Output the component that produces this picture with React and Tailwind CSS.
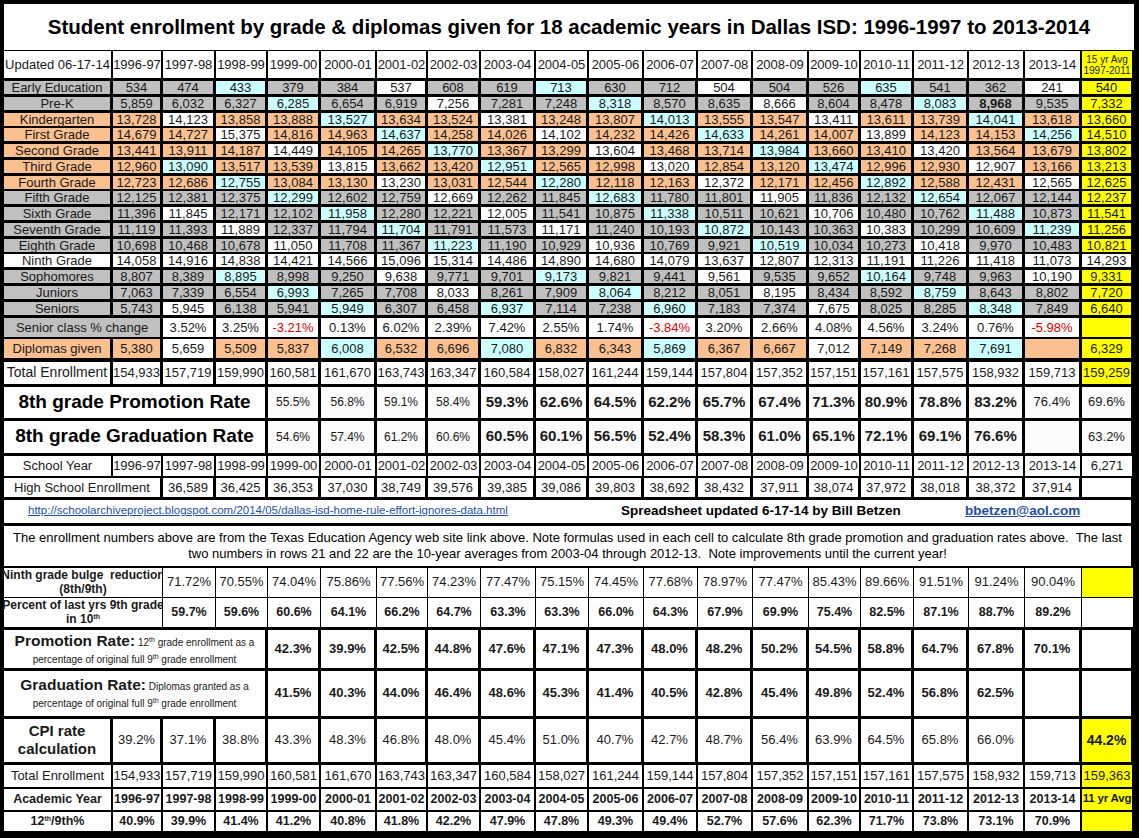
// Dallas ISD enrollment spreadsheet, redrawn as a Tailwind grid

const GRID =
  "grid grid-cols-[109px_50px_53px_52px_53px_56px_51px_53px_55px_53px_55px_54px_55px_56px_52px_53px_55px_56px_57px_52px]";

const BG = {
  g: "bg-[#c0c0c0]",
  o: "bg-[#fac090]",
  c: "bg-[#ccffff]",
  w: "bg-white",
  y: "bg-[#ffff00]",
};

const YEARS = [
  "1996-97", "1997-98", "1998-99", "1999-00", "2000-01", "2001-02", "2002-03", "2003-04", "2004-05",
  "2005-06", "2006-07", "2007-08", "2008-09", "2009-10", "2010-11", "2011-12", "2012-13", "2013-14",
];

const GRADES = [
  ["Early Education", "g", "ggcggwggcggwggcggwy", "534 474 433 379 384 537 608 619 713 630 712 504 504 526 635 541 362 241 540"],
  ["Pre-K", "g", "gggcggwggcggwggcggy", "5,859 6,032 6,327 6,285 6,654 6,919 7,256 7,281 7,248 8,318 8,570 8,635 8,666 8,604 8,478 8,083 *8,968 9,535 7,332"],
  ["Kindergarten", "o", "owoocoowoocoowoocoy", "13,728 14,123 13,858 13,888 13,527 13,634 13,524 13,381 13,248 13,807 14,013 13,555 13,547 13,411 13,611 13,739 14,041 13,618 13,660"],
  ["First Grade", "o", "oowoocoowoocoowoocy", "14,679 14,727 15,375 14,816 14,963 14,637 14,258 14,026 14,102 14,232 14,426 14,633 14,261 14,007 13,899 14,123 14,153 14,256 14,510"],
  ["Second Grade", "o", "ooowoocoowoocoowooy", "13,441 13,911 14,187 14,449 14,105 14,265 13,770 13,367 13,299 13,604 13,468 13,714 13,984 13,660 13,410 13,420 13,564 13,679 13,802"],
  ["Third Grade", "o", "ocoowoocoowoocoowoy", "12,960 13,090 13,517 13,539 13,815 13,662 13,420 12,951 12,565 12,998 13,020 12,854 13,120 13,474 12,996 12,930 12,907 13,166 13,213"],
  ["Fourth Grade", "o", "oocoowoocoowoocoowy", "12,723 12,686 12,755 13,084 13,130 13,230 13,031 12,544 12,280 12,118 12,163 12,372 12,171 12,456 12,892 12,588 12,431 12,565 12,625"],
  ["Fifth Grade", "g", "gggcggwggcggwggcggy", "12,125 12,381 12,375 12,299 12,602 12,759 12,669 12,262 11,845 12,683 11,780 11,801 11,905 11,836 12,132 12,654 12,067 12,144 12,237"],
  ["Sixth Grade", "g", "gwggcggwggcggwggcgy", "11,396 11,845 12,171 12,102 11,958 12,280 12,221 12,005 11,541 10,875 11,338 10,511 10,621 10,706 10,480 10,762 11,488 10,873 11,541"],
  ["Seventh Grade", "g", "ggwggcggwggcggwggcy", "11,119 11,393 11,889 12,337 11,794 11,704 11,791 11,573 11,171 11,240 10,193 10,872 10,143 10,363 10,383 10,299 10,609 11,239 11,256"],
  ["Eighth Grade", "g", "gggwggcggwggcggwggy", "10,698 10,468 10,678 11,050 11,708 11,367 11,223 11,190 10,929 10,936 10,769 9,921 10,519 10,034 10,273 10,418 9,970 10,483 10,821"],
  ["Ninth Grade", "w", "wwwwwwwwwwwwwwwwwww", "14,058 14,916 14,838 14,421 14,566 15,096 15,314 14,486 14,890 14,680 14,079 13,637 12,807 12,313 11,191 11,226 11,418 11,073 14,293"],
  ["Sophomores", "g", "ggcggwggcggwggcggwy", "8,807 8,389 8,895 8,998 9,250 9,638 9,771 9,701 9,173 9,821 9,441 9,561 9,535 9,652 10,164 9,748 9,963 10,190 9,331"],
  ["Juniors", "g", "gggcggwggcggwggcggy", "7,063 7,339 6,554 6,993 7,265 7,708 8,033 8,261 7,909 8,064 8,212 8,051 8,195 8,434 8,592 8,759 8,643 8,802 7,720"],
  ["Seniors", "g", "gwggcggcggcggwggcgy", "5,743 5,945 6,138 5,941 5,949 6,307 6,458 6,937 7,114 7,238 6,960 7,183 7,374 7,675 8,025 8,285 8,348 7,849 6,640"],
];

const CHANGE = "3.52% 3.25% -3.21% 0.13% 6.02% 2.39% 7.42% 2.55% 1.74% -3.84% 3.20% 2.66% 4.08% 4.56% 3.24% 0.76% -5.98%".split(" ");
const DIPLOMAS = "5,380 5,659 5,509 5,837 6,008 6,532 6,696 7,080 6,832 6,343 5,869 6,367 6,667 7,012 7,149 7,268 7,691 - 6,329".split(" ");
const TOTAL = "154,933 157,719 159,990 160,581 161,670 163,743 163,347 160,584 158,027 161,244 159,144 157,804 157,352 157,151 157,161 157,575 158,932 159,713".split(" ");
const PROMO8 = "55.5% 56.8% 59.1% 58.4% 59.3% 62.6% 64.5% 62.2% 65.7% 67.4% 71.3% 80.9% 78.8% 83.2% 76.4% 69.6%".split(" ");
const GRAD8 = "54.6% 57.4% 61.2% 60.6% 60.5% 60.1% 56.5% 52.4% 58.3% 61.0% 65.1% 72.1% 69.1% 76.6% - 63.2%".split(" ");
const HS = "36,589 36,425 36,353 37,030 38,749 39,576 39,385 39,086 39,803 38,692 38,432 37,911 38,074 37,972 38,018 38,372 37,914 -".split(" ");
const BULGE = "71.72% 70.55% 74.04% 75.86% 77.56% 74.23% 77.47% 75.15% 74.45% 77.68% 78.97% 77.47% 85.43% 89.66% 91.51% 91.24% 90.04%".split(" ");
const TENTH = "59.7% 59.6% 60.6% 64.1% 66.2% 64.7% 63.3% 63.3% 66.0% 64.3% 67.9% 69.9% 75.4% 82.5% 87.1% 88.7% 89.2% -".split(" ");
const PROMO = "42.3% 39.9% 42.5% 44.8% 47.6% 47.1% 47.3% 48.0% 48.2% 50.2% 54.5% 58.8% 64.7% 67.8% 70.1% -".split(" ");
const GRAD = "41.5% 40.3% 44.0% 46.4% 48.6% 45.3% 41.4% 40.5% 42.8% 45.4% 49.8% 52.4% 56.8% 62.5% - -".split(" ");
const CPI = "39.2% 37.1% 38.8% 43.3% 48.3% 46.8% 48.0% 45.4% 51.0% 40.7% 42.7% 48.7% 56.4% 63.9% 64.5% 65.8% 66.0% -".split(" ");
const RATIO = "40.9% 39.9% 41.4% 41.2% 40.8% 41.8% 42.2% 47.9% 47.8% 49.3% 49.4% 52.7% 57.6% 62.3% 71.7% 73.8% 73.1% 70.9%".split(" ");

const cell = "flex items-center justify-center text-center";
const show = (v) => (v === "-" ? "" : v);

function GradeRow({ label, lc, colors, values }) {
  const vals = values.split(" ");
  return (
    <div className={`${GRID} h-[13px] text-[13px] leading-none`}>
      <div className={`mr-[3px] ${cell} ${BG[lc]}`}>{label}</div>
      {vals.map((v, i) => (
        <div key={i} className={`mr-[3px] ${cell} ${BG[colors[i]]} ${v.startsWith("*") ? "font-bold" : ""}`}>
          {v.replace("*", "")}
        </div>
      ))}
    </div>
  );
}

// small raised "th"
function Th() {
  return <span className="relative top-[-4px] text-[7px] leading-none">th</span>;
}

export default function App() {
  return (
    <div className="w-[1139px] h-[838px] overflow-hidden bg-black pl-[4px] pr-[5px] pt-[4px] font-['Liberation_Sans',Arial,sans-serif] text-[#1a1a1a]">
      {/* title */}
      <div className="h-[46px] bg-white flex items-center justify-center text-[20.5px] font-bold text-black whitespace-nowrap">
        Student enrollment by grade &amp; diplomas given for 18 academic years in Dallas ISD: 1996-1997 to 2013-2014
      </div>

      {/* header */}
      <div className={`${GRID} mt-[1px] h-[27px] text-[13px]`}>
        <div className={`mr-[2px] bg-white ${cell}`}>Updated 06-17-14</div>
        {YEARS.map((y) => (
          <div key={y} className={`mr-[2px] bg-white ${cell}`}>{y}</div>
        ))}
        <div className={`mr-[2px] bg-[#ffff00] ${cell} flex-col text-[10px] leading-[11px]`}>
          <span>15 yr Avg</span>
          <span>1997-2011</span>
        </div>
      </div>

      {/* grades */}
      <div className="mt-[3px] flex flex-col gap-[2.75px]">
        {GRADES.map(([label, lc, colors, values]) => (
          <GradeRow key={label} label={label} lc={lc} colors={colors} values={values} />
        ))}
      </div>

      <div className={`${GRID} mt-[3px] h-[18px] text-[13px]`}>
        <div className={`col-span-2 mr-[3px] bg-[#c0c0c0] ${cell}`}>Senior class % change</div>
        {CHANGE.map((v, i) => (
          <div key={i} className={`mr-[3px] bg-white ${cell} ${v.startsWith("-") ? "text-[#e00000]" : ""}`}>{v}</div>
        ))}
        <div className="mr-[3px] bg-[#ffff00]" />
      </div>

      <div className={`${GRID} mt-[3px] h-[19px] text-[13px]`}>
        <div className={`mr-[3px] bg-[#fac090] ${cell}`}>Diplomas given</div>
        {DIPLOMAS.map((v, i) => (
          <div key={i} className={`mr-[3px] ${BG["owoocoocoocoowoocoy"[i]]} ${cell}`}>{show(v)}</div>
        ))}
      </div>

      <div className={`${GRID} mt-[4px] h-[22px] text-[13px]`}>
        <div className={`mr-[3px] bg-white ${cell} text-[14px]`}>Total Enrollment</div>
        {TOTAL.map((v, i) => (
          <div key={i} className={`mr-[3px] bg-white ${cell}`}>{v}</div>
        ))}
        <div className={`mr-[3px] bg-[#ffff00] ${cell}`}>159,259</div>
      </div>

      {/* 8th grade rates */}
      {[
        ["8th grade Promotion Rate", PROMO8, "h-[31px]"],
        ["8th grade Graduation Rate", GRAD8, "h-[32px]"],
      ].map(([label, vals, h]) => (
        <div key={label} className={`${GRID} mt-[3px] ${h}`}>
          <div className={`col-span-4 mr-[3px] bg-white ${cell} text-[19px] font-bold text-black`}>{label}</div>
          {vals.map((v, i) => (
            <div
              key={i}
              className={`mr-[3px] bg-[#fbfbfb] ${cell} ${
                i < 4 ? "text-[12px]" : i < 14 ? "text-[15px] font-bold" : "text-[13px]"
              }`}
            >
              {show(v)}
            </div>
          ))}
        </div>
      ))}

      <div className={`${GRID} mt-[3px] h-[20px] text-[13px]`}>
        <div className={`mr-[2px] bg-white ${cell}`}>School Year</div>
        {YEARS.map((y) => (
          <div key={y} className={`mr-[2px] bg-white ${cell}`}>{y}</div>
        ))}
        <div className={`mr-[2px] bg-white ${cell}`}>6,271</div>
      </div>

      <div className={`${GRID} mt-[2px] h-[19px] text-[13px]`}>
        <div className={`col-span-2 mr-[3px] bg-white ${cell}`}>High School Enrollment</div>
        {HS.map((v, i) => (
          <div key={i} className={`mr-[3px] bg-white ${cell}`}>{show(v)}</div>
        ))}
      </div>

      {/* link row */}
      <div className="mt-[3px] mr-[3px] h-[23px] bg-white grid grid-cols-[617px_344px_1fr] items-center">
        <span className="pl-[24px] text-[11.5px] text-[#1f4fa3] underline">
          http://schoolarchiveproject.blogspot.com/2014/05/dallas-isd-home-rule-effort-ignores-data.html
        </span>
        <span className="text-[13.5px] font-bold text-black">Spreadsheet updated 6-17-14 by Bill Betzen</span>
        <span className="text-[13.5px] font-bold text-[#1f4fa3] underline">bbetzen@aol.com</span>
      </div>

      {/* note */}
      <div className="mt-[3px] mr-[3px] h-[40px] bg-white flex flex-col items-center justify-center text-[13px] leading-[16px] text-black whitespace-nowrap">
        <span>
          The enrollment numbers above are from the Texas Education Agency web site link above. Note formulas used in each cell to calculate 8th grade promotion and graduation rates above.&nbsp; The last
        </span>
        <span>
          two numbers in rows 21 and 22 are the 10-year averages from 2003-04 through 2012-13.&nbsp; Note improvements until the current year!
        </span>
      </div>

      {/* lower table */}
      <div className={`${GRID} mt-[2px] h-[29px] text-[13px]`}>
        <div className={`col-span-2 mr-[1px] bg-white ${cell} flex-col text-[12px] leading-[14px] font-bold whitespace-nowrap`}>
          <span>Ninth grade bulge&nbsp; reduction</span>
          <span>(8th/9th)</span>
        </div>
        {BULGE.map((v, i) => (
          <div key={i} className={`mr-[1px] bg-white ${cell}`}>{v}</div>
        ))}
        <div className="mr-[1px] bg-[#ffff00]" />
      </div>

      <div className={`${GRID} mt-[1px] h-[29px] text-[12.5px] font-bold`}>
        <div className={`col-span-2 mr-[1px] bg-white ${cell} flex-col text-[12px] leading-[14px] whitespace-nowrap`}>
          <span>Percent of last yrs 9th grade</span>
          <span>
            in 10<Th />
          </span>
        </div>
        {TENTH.map((v, i) => (
          <div key={i} className={`mr-[1px] bg-white ${cell}`}>{show(v)}</div>
        ))}
      </div>

      {[
        ["Promotion Rate:", " 12", true, " grade enrollment as a", PROMO, "h-[38px]"],
        ["Graduation Rate:", " Diplomas granted as a", false, "", GRAD, "h-[45px]"],
      ].map(([title, a, sup, b, vals, h]) => (
        <div key={title} className={`${GRID} mt-[3px] ${h}`}>
          <div className={`col-span-4 mr-[3px] bg-white ${cell} flex-col whitespace-nowrap`}>
            <span className="text-[10px] leading-[20px]">
              <span className="text-[15.5px] font-bold">{title}</span>
              {a}
              {sup && <Th />}
              {b}
            </span>
            <span className="text-[10px] leading-[14px]">
              percentage of original full 9<Th /> grade enrollment
            </span>
          </div>
          {vals.map((v, i) => (
            <div key={i} className={`mr-[3px] bg-white ${cell} text-[13px] font-bold`}>{show(v)}</div>
          ))}
        </div>
      ))}

      <div className={`${GRID} mt-[3px] h-[43px] text-[13px]`}>
        <div className={`mr-[3px] bg-white ${cell} flex-col text-[15px] leading-[18px] font-bold`}>
          <span>CPI rate</span>
          <span>calculation</span>
        </div>
        {CPI.map((v, i) => (
          <div key={i} className={`mr-[3px] bg-white ${cell}`}>{show(v)}</div>
        ))}
        <div className={`mr-[3px] bg-[#ffff00] ${cell} text-[14px] font-bold`}>44.2%</div>
      </div>

      <div className={`${GRID} mt-[3px] h-[22px] text-[13px]`}>
        <div className={`mr-[2px] bg-white ${cell}`}>Total Enrollment</div>
        {TOTAL.map((v, i) => (
          <div key={i} className={`mr-[2px] bg-white ${cell}`}>{v}</div>
        ))}
        <div className={`mr-[2px] bg-[#ffff00] ${cell}`}>159,363</div>
      </div>

      <div className={`${GRID} mt-[2px] h-[21px] text-[12.5px] font-bold`}>
        <div className={`mr-[2px] bg-white ${cell}`}>Academic Year</div>
        {YEARS.map((y) => (
          <div key={y} className={`mr-[2px] bg-white ${cell}`}>{y}</div>
        ))}
        <div className={`mr-[2px] bg-[#ffff00] ${cell} whitespace-nowrap text-[11.5px] tracking-[-0.2px]`}>11 yr Avg</div>
      </div>

      <div className={`${GRID} mt-[2px] h-[19px] text-[12.5px] font-bold`}>
        <div className={`mr-[2px] bg-white ${cell}`}>
          <span>
            12<Th />/9th%
          </span>
        </div>
        {RATIO.map((v, i) => (
          <div key={i} className={`mr-[2px] bg-white ${cell}`}>{v}</div>
        ))}
        <div className="mr-[2px] bg-[#ffff00]" />
      </div>
    </div>
  );
}
